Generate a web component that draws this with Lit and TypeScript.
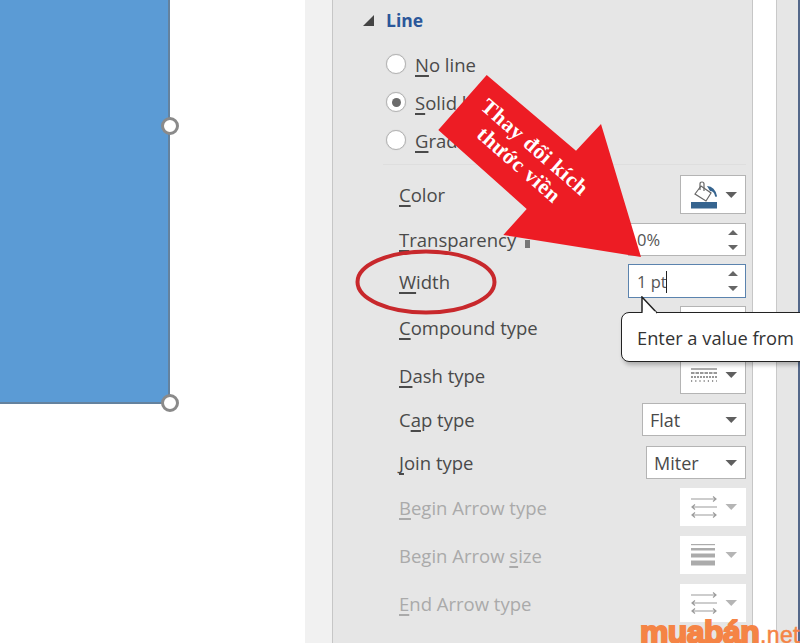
import { LitElement, html, css } from "lit";
import { customElement } from "lit/decorators.js";

const caret = (color = "#5f5f5f") => html`<svg class="caret" width="18" height="10" viewBox="0 0 18 10"><path d="M2.500 2h11.500l-5.750 6z" fill=${color}></path></svg>`;
const spinner = html`<svg width="14" height="26" viewBox="0 0 14 26"><path d="M2 8 7 3l5 5z M2 18l5 5 5-5z" fill="#666"></path></svg>`;
const arrowsIcon = html`<svg width="26" height="22" viewBox="0 0 26 22" fill="none" stroke="#9c9c9c" stroke-width="1.200"><path d="M0 3h25M22 .5l3 2.500-3 2.500"></path><path d="M1 11h25M4 8.500 1 11l3 2.500"></path><path d="M1 19h24M4 16.500 1 19l3 2.500M22 16.500l3 2.500-3 2.500"></path></svg>`;
const sizesIcon = html`<svg width="24" height="22" viewBox="0 0 24 22" fill="#ababab"><rect y="0" width="24" height="1.200"></rect><rect y="4" width="24" height="2.500"></rect><rect y="9.500" width="24" height="4"></rect><rect y="16.500" width="24" height="5"></rect></svg>`;
const dashIcon = html`<svg width="26" height="14" viewBox="0 0 26 14" fill="none" stroke="#777"><path d="M0 1h26" stroke-width="1.200"></path><path d="M0 5h26" stroke-width="1.300" stroke-dasharray="3.500 1"></path><path d="M0 9h26" stroke-width="1.300" stroke-dasharray="2 1"></path><path d="M0 13h26" stroke-width="1.300" stroke-dasharray="1.200 3"></path></svg>`;
const bucketIcon = html`<svg width="27" height="28" viewBox="0 0 27 28"><rect x="0" y="21" width="26" height="6.500" fill="#36648f"></rect><path d="M4 13 10 5l10 7-5 8z" fill="#fff" stroke="#666" stroke-width="1.200"></path><path d="M9 9V3q0-2 2-2t2 2v7" fill="none" stroke="#666" stroke-width="1.200"></path><path d="M16 5q8 .5 10 10-1 2-2 0-1-5-5-5z" fill="#36648f"></path></svg>`;

@customElement("app-root")
export class AppRoot extends LitElement {
  static styles = css`
    :host { display: block; width: 800px; height: 643px; overflow: hidden; position: relative; background: #fff; font-family: "Open Sans", "Noto Sans", sans-serif; }
    .app { display: flex; height: 643px; }
    .doc { width: 305px; flex: none; }
    .shape { width: 170px; height: 404px; background: #5b9bd5; border-right: 2px solid #64829e; border-bottom: 2px solid #64829e; box-sizing: border-box; position: relative; }
    .handle { position: absolute; right: -11px; width: 12px; height: 12px; border: 3px solid #8a8a8a; border-radius: 50%; background: #fff; }
    .handle.mid { top: 117px; }
    .handle.end { bottom: -10px; }
    .gutter { width: 27px; flex: none; background: #f1f1f1; border-right: 1px solid #c6c6c6; }
    .panel { width: 420px; flex: none; background: #e6e6e6; border-right: 1px solid #c6c6c6; box-sizing: border-box; color: #4a4a4a; font-size: 18.500px; padding: 0 6px 0 0; }
    .white { width: 23px; flex: none; background: #fff; border-right: 1px solid #c9c9c9; }
    .rail { flex: 1; background: #e6e6e6; border-right: 2px solid #54688a; }
    .head { display: flex; align-items: center; gap: 11px; height: 40px; padding-left: 29px; color: #2b579a; font-weight: 700; font-size: 17.500px; }
    .head svg { flex: none; }
    .radios { display: grid; grid-auto-rows: 38px; padding: 5px 0 0 3px; margin-left: 50px; height: 125px; box-sizing: border-box; border-bottom: 1px solid #dedede; }
    .radio { display: flex; align-items: center; gap: 9px; height: 38px; }
    .dot { width: 18px; height: 18px; border: 1px solid #b4b4b4; border-radius: 50%; background: #fff; display: grid; place-items: center; flex: none; box-shadow: 0 0 1px #bbb; }
    .dot.on::after { content: ""; width: 9px; height: 9px; border-radius: 50%; background: #6b6b6b; }
    u { text-underline-offset: 3px; text-decoration-thickness: 1.500px; }
    .form { display: grid; grid-template-columns: 1fr; padding: 10px 0 0 66px; }
    .row { display: flex; align-items: center; justify-content: space-between; }
    .row.off { color: #aaa; }
    .thumb { display: inline-block; width: 5px; height: 8px; background: #777; margin-left: 9px; vertical-align: -1px; }
    .box { display: flex; align-items: center; justify-content: space-between; background: #fff; border: 1px solid #b4b4b4; box-sizing: border-box; height: 100%; font-size: 18px; }
    .icon { width: 66px; padding: 0 4px 0 10px; }
    .off .box { border-color: transparent; }
    .spin-box { width: 118px; padding: 0 5px 0 8px; font-size: 16.500px; color: #555; }
    .focus { border-color: #5b83ae; border-width: 1.500px; }
    .caretline { display: inline-block; width: 1.500px; height: 22px; background: #222; vertical-align: -5px; margin-left: -1px; }
    .select { padding: 0 4px 0 7px; }
    .cap { width: 104px; } .join { width: 100px; }
    .overlay { position: absolute; inset: 0; pointer-events: none; }
    .label { position: absolute; left: 0; top: 0; transform-origin: 0 0; color: #fff; font-family: "Liberation Serif", serif; font-weight: 700; font-size: 21.500px; white-space: nowrap; letter-spacing: 0.600px; }
    .l1 { transform: translate(492px, 94px) rotate(41deg); }
    .l2 { transform: translate(488px, 122px) rotate(41deg); }
    .tip { position: absolute; left: 621px; top: 312px; width: 200px; height: 50px; box-sizing: border-box; background: #fff; border: 1.500px solid #222; border-radius: 8px; box-shadow: 2px 3px 4px rgba(0,0,0,.25); padding: 1px 0 0 15px; display: flex; align-items: center; font-size: 18.300px; color: #333; }
    .tail { position: absolute; left: 639px; top: 296px; pointer-events: none; }
    .logo { position: absolute; left: 640px; top: 613px; color: #f58445; font-family: "Liberation Sans", sans-serif; font-weight: 700; font-size: 32px; line-height: 38px; white-space: nowrap; letter-spacing: -0.600px; -webkit-text-stroke: 2px #f58445; }
    .logo span { font-size: 23px; font-weight: 400; -webkit-text-stroke: 0.500px #f58445; letter-spacing: 0.300px; margin-left: 1px; }
  `;

  private row(label: unknown, control: unknown, h: number, gap: number, off = false) {
    return html`<div class="row ${off ? "off" : ""}" style="height:${h}px;margin-bottom:${gap}px"><span>${label}</span>${control}</div>`;
  }

  render() {
    return html`
      <div class="app">
        <div class="doc"><div class="shape"><i class="handle mid"></i><i class="handle end"></i></div></div>
        <div class="gutter"></div>
        <div class="panel">
          <div class="head"><svg width="13" height="13" viewBox="0 0 13 13"><path d="M12 1v11H1z" fill="#444"></path></svg>Line</div>
          <div class="radios">
            <div class="radio"><i class="dot"></i><span><u>N</u>o line</span></div>
            <div class="radio"><i class="dot on"></i><span><u>S</u>olid line</span></div>
            <div class="radio"><i class="dot"></i><span><u>G</u>radient line</span></div>
          </div>
          <div class="form">
            ${this.row(html`<u>C</u>olor`, html`<div class="box icon">${bucketIcon}${caret()}</div>`, 39, 9)}
            ${this.row(html`<u>T</u>ransparency<i class="thumb"></i>`, html`<div class="box spin-box"><span>0%</span>${spinner}</div>`, 33, 8)}
            ${this.row(html`<u>W</u>idth`, html`<div class="box spin-box focus"><span>1 pt<i class="caretline"></i></span>${spinner}</div>`, 34, 8)}
            ${this.row(html`<u>C</u>ompound type`, html`<div class="box icon"></div>`, 42, 8)}
            ${this.row(html`<u>D</u>ash type`, html`<div class="box icon">${dashIcon}${caret()}</div>`, 38, 9)}
            ${this.row(html`C<u>a</u>p type`, html`<div class="box select cap"><span>Flat</span>${caret()}</div>`, 33, 10)}
            ${this.row(html`<u>J</u>oin type`, html`<div class="box select join"><span>Miter</span>${caret()}</div>`, 33, 9)}
            ${this.row(html`<u>B</u>egin Arrow type`, html`<div class="box icon">${arrowsIcon}${caret("#b5b5b5")}</div>`, 38, 10, true)}
            ${this.row(html`Begin Arrow <u>s</u>ize`, html`<div class="box icon">${sizesIcon}${caret("#b5b5b5")}</div>`, 38, 10, true)}
            ${this.row(html`<u>E</u>nd Arrow type`, html`<div class="box icon">${arrowsIcon}${caret("#b5b5b5")}</div>`, 38, 0, true)}
          </div>
        </div>
        <div class="white"></div>
        <div class="rail"></div>
      </div>
      <div class="tip">Enter a value from</div>
      <svg class="tail" width="30" height="20" viewBox="0 0 30 20"><path d="M3 17V1l15 16" fill="#fff" stroke="#222" stroke-width="1.500"></path><rect x="3.800" y="15.500" width="13" height="3.500" fill="#fff"></rect></svg>
      <svg class="overlay" width="800" height="643" viewBox="0 0 800 643">
        <path d="M486.700 75 438.300 130 526.700 209 503.300 235 641 257 601 124 576 150.700z" fill="#ed1c24"></path>
        <ellipse cx="426" cy="282" rx="68.500" ry="30.500" fill="none" stroke="#c8282c" stroke-width="4"></ellipse>
      </svg>
      <div class="label l1">Thay đổi kích</div>
      <div class="label l2">thước viền</div>
      <div class="logo">muabán<span>.net</span></div>
    `;
  }
}
